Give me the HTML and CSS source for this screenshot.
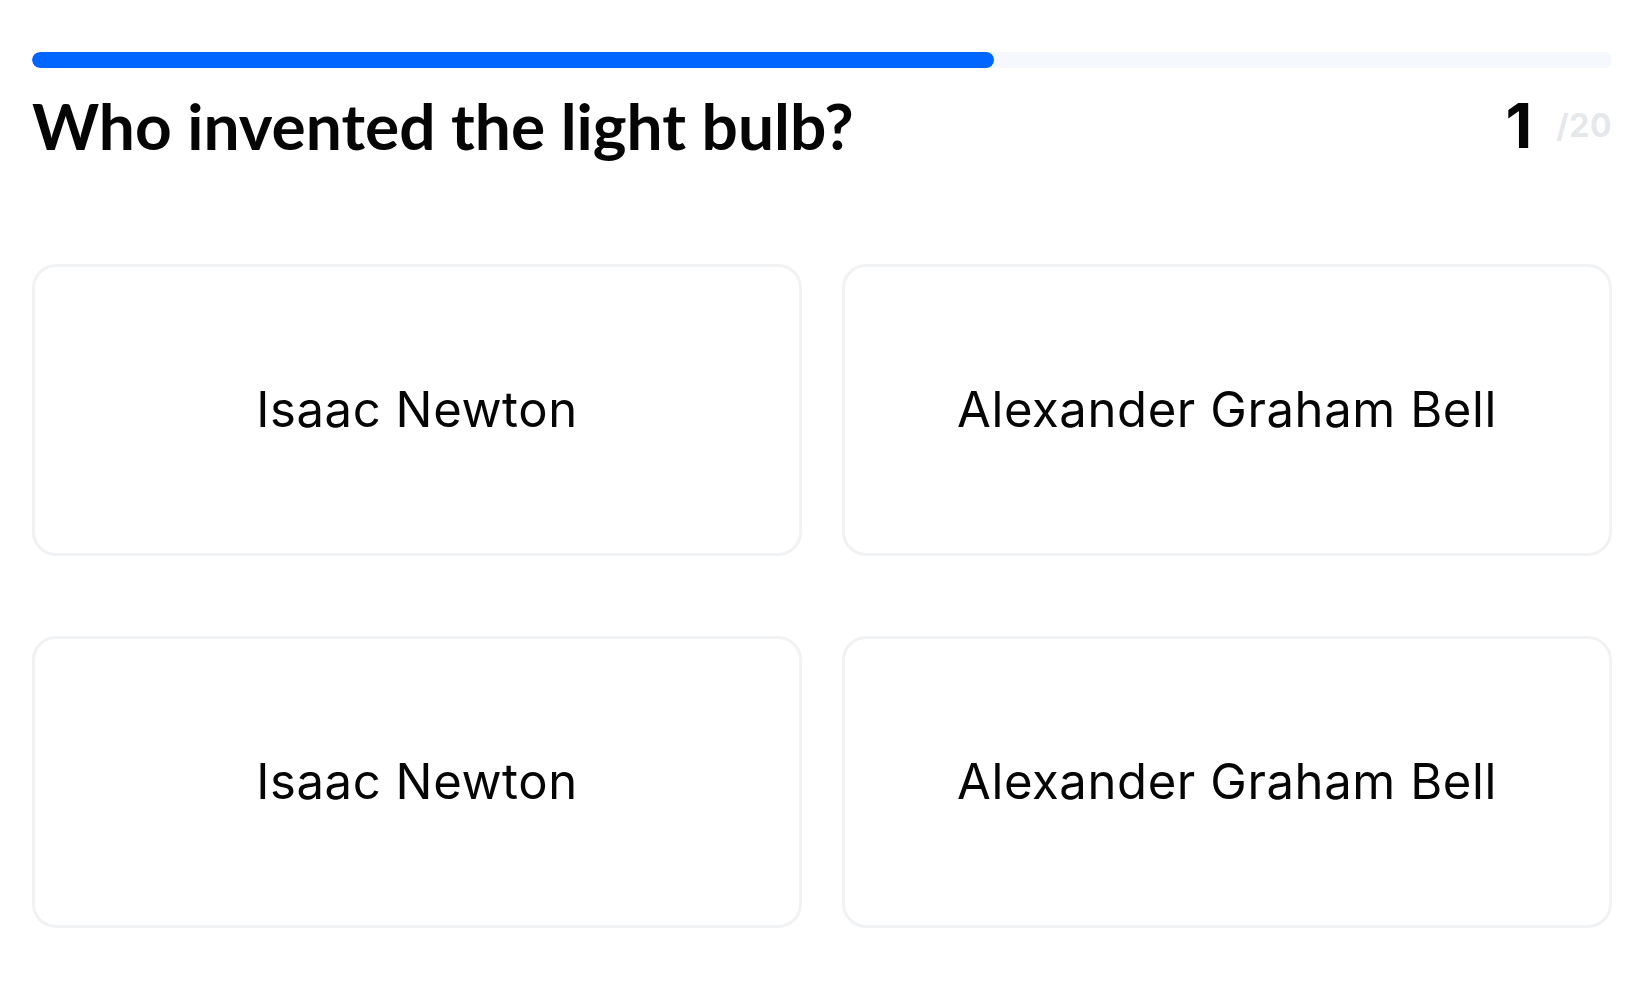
FILE: index.html
```html
<!DOCTYPE html>
<html lang="en">
<head>
<meta charset="utf-8">
<title>Quiz</title>
<link rel="stylesheet" href="styles.css">
</head>
<body>
<main class="quiz">
  <div class="progress">
    <div class="progress-fill" style="width: 60.9%"></div>
  </div>
  <header class="question-row">
    <h1 class="question">Who invented the light bulb?</h1>
    <div class="counter">
      <span class="counter-current">1</span>
      <span class="counter-total">/20</span>
    </div>
  </header>
  <section class="answers">
    <button class="answer">Isaac Newton</button>
    <button class="answer">Alexander Graham Bell</button>
    <button class="answer">Isaac Newton</button>
    <button class="answer">Alexander Graham Bell</button>
  </section>
</main>
</body>
</html>
```
FILE: styles.css
```css
* { box-sizing: border-box; }
html, body { margin: 0; padding: 0; background: #ffffff; }
body { color: #000; font-family: Lato, "Liberation Sans", sans-serif; }

.quiz {
  padding: 52px 32px 0 32px;
}

.progress {
  height: 16px;
  border-radius: 8px;
  background: #f5f8fd;
  overflow: hidden;
}
.progress-fill {
  height: 100%;
  background: #0066ff;
  border-radius: 8px;
}

.question-row {
  display: flex;
  align-items: center;
  justify-content: space-between;
  margin-top: 26px;
  height: 63px;
}
.question {
  margin: 0;
  font-family: Lato, "Liberation Sans", sans-serif;
  font-weight: 700;
  font-size: 64px;
  line-height: 63px;
  color: #050505;
}
.counter {
  display: flex;
  align-items: center;
  gap: 24px;
  font-family: Inter, "Liberation Sans", sans-serif;
  font-weight: 700;
}
.counter-current {
  font-size: 62px;
  line-height: 63px;
  color: #050505;
}
.counter-total {
  font-size: 32px;
  line-height: 32px;
  color: #e6e7ea;
  letter-spacing: 0.5px;
}

.answers {
  display: grid;
  grid-template-columns: 1fr 1fr;
  column-gap: 40px;
  row-gap: 80px;
  margin-top: 107px;
}
.answer {
  height: 292px;
  display: flex;
  align-items: center;
  justify-content: center;
  background: #ffffff;
  border: 3px solid #f1f2f4;
  border-radius: 24px;
  font-family: Inter, "Liberation Sans", sans-serif;
  font-weight: 400;
  font-size: 49px;
  letter-spacing: 0.6px;
  color: #050505;
  padding: 0 0 2px 0;
  cursor: pointer;
}
```
